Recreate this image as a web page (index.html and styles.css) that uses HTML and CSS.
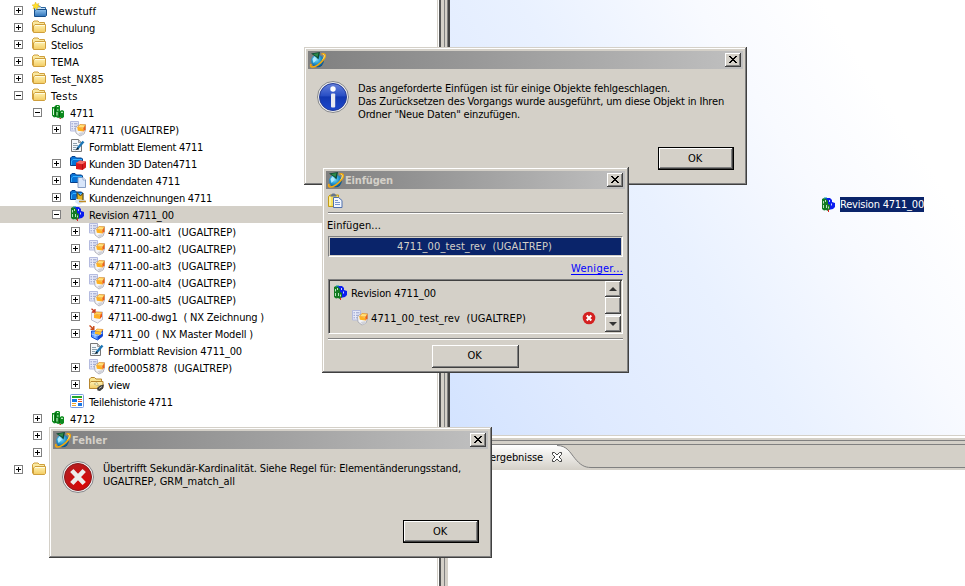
FILE: index.html
```html
<!DOCTYPE html>
<html lang="de">
<head>
<meta charset="utf-8">
<title>Einfügen</title>
<link rel="stylesheet" href="styles.css">
</head>
<body>
<svg class="defs" aria-hidden="true">
  <defs>
    <linearGradient id="gy" x1="0" y1="0" x2="0" y2="1"><stop offset="0" stop-color="#fff3b4"/><stop offset="1" stop-color="#f3cb60"/></linearGradient>
    <linearGradient id="gb" x1="0" y1="0" x2="0" y2="1"><stop offset="0" stop-color="#8fc2ee"/><stop offset="1" stop-color="#2e72b8"/></linearGradient>
    <radialGradient id="gr" cx=".65" cy=".7" r=".8"><stop offset="0" stop-color="#dc0505"/><stop offset="1" stop-color="#b11e22"/></radialGradient>
    <linearGradient id="gi" x1="0" y1="0" x2="0" y2="1"><stop offset="0" stop-color="#6883dc"/><stop offset=".45" stop-color="#294fc5"/><stop offset=".5" stop-color="#1238b1"/><stop offset="1" stop-color="#1c48cc"/></linearGradient>
    <radialGradient id="gg" cx=".4" cy=".35" r=".7"><stop offset="0" stop-color="#8de3fa"/><stop offset=".5" stop-color="#249bd5"/><stop offset="1" stop-color="#06447c"/></radialGradient>
    <linearGradient id="gt" x1="0" y1="0" x2="0" y2="1"><stop offset="0" stop-color="#fff"/><stop offset="1" stop-color="#d4d0c8"/></linearGradient>
  </defs>
  <symbol id="folder" viewBox="0 0 16 16">
    <path d="M.5 12.500V3.500L2 2h4l1.500 1.500h5V6" fill="#fae9a0" stroke="#cf9f3c"/>
    <path d="M1.500 13.500V7L3 5.500h10.500v7l-1 1z" fill="url(#gy)" stroke="#cf9f3c"/><path d="M3 6.500h10" stroke="#fffce0"/>
  </symbol>
  <symbol id="newfolder" viewBox="0 0 16 16">
    <path d="M2.500 13V5L4 4h3.500L9 5.500h4.500v3" fill="#c5e0f7" stroke="#28649f"/>
    <path d="M2.500 14.500V9L4 7.500h10.500v6l-1 1z" fill="url(#gb)" stroke="#164d88"/>
    <path d="M3.500 0l1 2.200L7 1.500 5.800 3.500 8 5 5.500 5.200 5 8 3.500 5.800 1 7l.8-2.500L0 3l2.600-.4z" fill="#ffe02d" stroke="#d9a300" stroke-width=".4"/>
  </symbol>
  <symbol id="item" viewBox="0 0 16 16">
    <path d="M1 3h2l2-2h3l1 1v5l2-1 2 1v6l-2 1.500-2-1-2 .5-2-1-2 .5-2-2z" fill="#0d8a1e"/>
    <path d="M2.500 4.500V11M6 2.500h1.500M6 6h1.500M6 8v3.500M10 8l1 .6 1-.6" stroke="#d9ffd9" fill="none"/><path d="M4.500 3v9.500M8.500 8v5.500" stroke="#06560f" stroke-width=".8"/><path d="M8.500 14.500h1.500" stroke="#d03020"/>
  </symbol>
  <symbol id="rev" viewBox="0 0 16 16">
    <path d="M4 1h5l2 2v2l3 1v4l-2 2-5 1-3-3z" fill="#0a1cf0"/>
    <path d="M1 2l2-1 2 1 2 2v3l2 1v4l-2 2-2-1-2 .5L1 12z" fill="#127a22"/>
    <path d="M2.500 4v2.500M2.500 8v3M4.500 3v2M5.500 8v3M7.500 9.500v2" stroke="#c9efd0" stroke-width=".9"/><path d="M8.500 3v2M10.500 6.500v2" stroke="#dfe4ff" stroke-width=".9"/>
    <path d="M7 12.500h1V15H7z" fill="#e02020"/><path d="M3 1h3" stroke="#00a0a0"/>
  </symbol>
  <symbol id="alt" viewBox="0 0 16 16">
    <path d="M.5.500h8v9.500h-8z" fill="#e6e9f8" stroke="#b4bbdf"/><path d="M1.500 2.800h1.500M4 2.800h3.500M1.500 5.300h1.500M4 5.300h3M1.500 7.800h1.500M4 7.800h2" stroke="#949ecb"/>
    <path d="M5.500 7l2-2.500 8-1v5.500l-1.500 4-4 2-4-3z" fill="#f4f5f8" stroke="#9fa1ac" stroke-width=".8"/>
    <path d="M7.500 6.500l2.500-3 5.500.5-2 3z" fill="#ffe27c" stroke="#f39a28" stroke-width=".8"/><path d="M7.300 6.500l6.200.9v3.200l-5.700-.8z" fill="#ffb11f"/><path d="M13.300 7.200L15.500 4.200v4l-2 2.600z" fill="#ee6212"/>
    <path d="M8.500 12l5-1v2.500l-3 1.300z" fill="#d0d2d9"/>
  </symbol>
  <symbol id="dwg" viewBox="0 0 16 16">
    <path d="M2.500 4h11v7.500l-5 3.500-6-3z" fill="#f5f5fa" stroke="#b0b0c4" stroke-width=".8"/>
    <path d="M5 6l2-2 6 .5-2 2.500z" fill="#ffd85c" stroke="#ef8b1c" stroke-width=".7"/><path d="M5 6.500l6 .8V11l-6-1z" fill="#ffaf22"/><path d="M11 7.300L13 5v3.500L11 11z" fill="#ee5a12"/>
    <path d="M2.500.8l3.500 3M3 4h3V1" stroke="#c8381c" stroke-width="1.300" fill="none"/>
  </symbol>
  <symbol id="master" viewBox="0 0 16 16">
    <path d="M2.500 6h5l6-1v6l-5 4-6-3z" fill="#5698ff" stroke="#1a50d5"/><path d="M2.500 9l6 2 5-3M6 7v6" stroke="#c7deff" fill="none" stroke-width=".8"/>
    <path d="M6 6l2-2 6 .5-2 2.500z" fill="#ffe26b" stroke="#ef8b1c" stroke-width=".7"/><path d="M6 6.500l6 .8V10l-6-1z" fill="#ffbd22"/>
    <path d="M8.500 11.500l5-3v3l-5 3.500z" fill="#1145d6"/>
    <path d="M.500.500l4 3.500M1.500 4.300h3.300V1" stroke="#c84b1c" stroke-width="1.400" fill="none"/>
  </symbol>
  <symbol id="form" viewBox="0 0 16 16">
    <path d="M1.500 1.500h7l3 3v9h-10z" fill="#f5f8fa" stroke="#777"/><path d="M8.500 1.500v3h3" fill="#ccc" stroke="#777" stroke-width=".7"/>
    <path d="M3 5.500h4M3 7.500h5M3 9.500h3M3 11.500h6" stroke="#8da0ac"/>
    <path d="M13.500 3.500L7 11" stroke="#1d76b5" stroke-width="2.400"/><path d="M8 9.200l-2.600 3.400 3.300-1.900z" fill="#111"/>
  </symbol>
  <symbol id="bluef" viewBox="0 0 16 16">
    <path d="M.5 10.500V3L2 1.500h3L6.500 3h5l1 1v6.500z" fill="#0872d5" stroke="#063f88"/><path d="M1.500 10V6L3 4.500h9" stroke="#35b0ff" fill="none"/>
  </symbol>
  <symbol id="k3d" viewBox="0 0 16 16"><use href="#bluef"/><path d="M6 8l4-2.500 6 1v6l-3.500 2.500L6 14z" fill="#d81a1c"/><path d="M6 8l4-2.500 6 1-3.500 2.700z" fill="#f56b66"/><path d="M12.500 9.200v5.500" stroke="#9c0c10" stroke-width=".7"/></symbol>
  <symbol id="kdat" viewBox="0 0 16 16"><use href="#bluef"/><path d="M8 5.500h5l2.500 2.500v7.500H8z" fill="#d8e6fa" stroke="#7b94bd" stroke-width=".9"/><path d="M13 5.500V8h2.500" fill="#fff" stroke="#7b94bd" stroke-width=".7"/></symbol>
  <symbol id="kzei" viewBox="0 0 16 16"><use href="#bluef"/><path d="M5 13l2-6 7-3v6l2 2-4 2-3 2z" fill="#d7e7f6"/><path d="M7 10V3.500l3.500 3.500L13 4v7" fill="#e5b520" stroke="#453915" stroke-width="1"/><path d="M9 12.500h7" stroke="#c08b25" stroke-width="1.500"/></symbol>
  <symbol id="view" viewBox="0 0 16 16"><path d="M.5 12.500V3L2 1.500h3.500L7 3h5.500v3" fill="#f9e591" stroke="#b7862e"/><path d="M.5 12.500V7L2 5.500h12v6l-1 1z" fill="url(#gy)" stroke="#b7862e"/><path d="M5 8l3-1.500L9.500 10z" fill="#fff9cf" stroke="#aaa269" stroke-width=".6"/><path d="M8 12l3-2.500 4-1-1 4-3 2.500-2.500-.5z" fill="#3f3f3f"/><path d="M10 12.500l3-2" stroke="#b7b7b7"/></symbol>
  <symbol id="hist" viewBox="0 0 16 16"><rect x=".5" y="1.500" width="13" height="13" rx="1" fill="#fff" stroke="#7a9be0"/><path d="M2 4h10" stroke="#24a72a" stroke-width="2"/><path d="M2 7.500h5" stroke="#1976e4" stroke-width="3"/><path d="M8 6.500h4M8 8.500h4" stroke="#e35a28"/><path d="M2 10.500h4M2 12.500h4" stroke="#f0a52c"/><path d="M8 11.500h4" stroke="#1976e4" stroke-width="3"/></symbol>
  <symbol id="logo" viewBox="0 0 18 16">
    <circle cx="8.500" cy="9" r="6.300" fill="url(#gg)"/><path d="M3.500 7l2.500-3 1.500 4-3 3z" fill="#aeeafd"/>
    <path d="M12.500 2c4-1 5 1.500 2 5.500C11.500 11.500 6.500 15.500 3 15c-1.500-.2-1.600-1.500-1-3" fill="none" stroke="#f5a80b" stroke-width="1.600"/><path d="M14 2.500c2.200 0 1.500 3-.5 5" fill="none" stroke="#ffea75"/>
    <path d="M2 1.500l9-1.500L9.500 7.500 7 5z" fill="#0d4932"/><path d="M4 2l5.500-1L8.500 5z" fill="#2e8b4a"/>
  </symbol>
  <symbol id="paste" viewBox="0 0 16 16"><path d="M.5 3.500L2 2h8.500v11.500h-10z" fill="#f6df5d" stroke="#c29b18"/><path d="M2 4v8.500" stroke="#fff6b0" stroke-width="1.500"/><path d="M2.500 2.500l2-2h2l2 2v1h-6z" fill="#65758c"/><path d="M5.500 4.500h5l3.500 3V14.500H5.500z" fill="#f2f7ff" stroke="#4f6fae"/><path d="M7 7.500h3M7 9.500h5M7 11.500h5" stroke="#7895cf"/></symbol>
  <symbol id="err" viewBox="0 0 14 14"><circle cx="7" cy="7" r="6.300" fill="#d42020"/><path d="M4.700 4.500l4.600 5M9.300 4.500l-4.600 5" stroke="#fff" stroke-width="2"/></symbol>
  <symbol id="close" viewBox="0 0 16 14"><path d="M4 3h2v1h1v1h2V4h1V3h2v1h-1v1h-1v1H9v1h1v1h1v1h1v1h-2V9H9V8H7v1H6v1H4V9h1V8h1V7h1V6H6V5H5V4H4z"/></symbol>
</svg>

<main class="app">
  <section class="tree" id="tree"></section>
  <div class="sash"><i></i></div>
  <section class="right">
    <div class="canvas">
      <div class="node"><svg class="ic"><use href="#rev"/></svg><span class="sel"><span data-w="84">Revision 4711_00</span></span></div>
    </div>
    <div class="hsash"></div>
    <div class="tabs">
      <div class="tab"><span data-w="53">ergebnisse</span><svg class="tabx" viewBox="0 0 12 12"><path d="M1.500 1.500h2L6 4l2.500-2.500h2v2L8 6l2.500 2.500v2h-2L6 8l-2.500 2.500h-2v-2L4 6 1.500 3.500z" fill="#fff" stroke="#444"/></svg></div>
      <svg class="curve" viewBox="0 0 40 25"><path d="M0 0H40V25H0z" fill="url(#gt)"/><path d="M0 .5c10 0 13 7 18 13s9 9 16 9h6V0H0z" fill="#d4d0c8"/><path d="M34 22.500h6V25H34z" fill="#d4d0c8"/><path d="M0 .5c10 0 13 7 18 13s9 9 16 9h6" fill="none" stroke="#808080"/></svg>
      <div class="rest"></div>
    </div>
    <div class="blank"></div>
  </section>
</main>

<div class="dlg info">
  <header><svg class="logo"><use href="#logo"/></svg><b></b><button class="x"><svg><use href="#close"/></svg></button></header>
  <div class="msg">
    <svg class="big" viewBox="0 0 32 32"><circle cx="16" cy="16" r="15.500" fill="#eee" stroke="#85878b"/><circle cx="16" cy="16" r="13.500" fill="url(#gi)" stroke="#243b98"/><circle cx="16" cy="8" r="2.700" fill="#fff"/><rect x="14" y="12.500" width="4.200" height="14" rx="1" fill="#e9eaf0"/></svg>
    <p><span data-w="312">Das angeforderte Einfügen ist für einige Objekte fehlgeschlagen.</span><br><span data-w="366">Das Zurücksetzen des Vorgangs wurde ausgeführt, um diese Objekt in Ihren</span><br><span data-w="162">Ordner "Neue Daten" einzufügen.</span></p>
  </div>
  <button class="btn def"><span data-w="14">OK</span></button>
</div>

<div class="dlg paste">
  <header><svg class="logo"><use href="#logo"/></svg><b><span data-w="48">Einfügen</span></b><button class="x"><svg><use href="#close"/></svg></button></header>
  <div class="body">
    <svg class="ic pic"><use href="#paste"/></svg>
    <hr>
    <div class="lbl"><span data-w="54">Einfügen...</span></div>
    <div class="field"><span data-w="155">4711_00_test_rev&nbsp; (UGALTREP)</span></div>
    <div class="more"><a data-w="52">Weniger...</a></div>
    <div class="list">
      <div class="rows">
        <div class="r1"><svg class="ic"><use href="#rev"/></svg><span data-w="85">Revision 4711_00</span></div>
        <div class="r2"><svg class="ic"><use href="#alt"/></svg><span data-w="155">4711_00_test_rev&nbsp; (UGALTREP)</span><svg class="er"><use href="#err"/></svg></div>
      </div>
      <div class="scroll"><i class="up"></i><i class="thumb"></i><i class="track"></i><i class="down"></i></div>
    </div>
    <hr>
    <button class="btn"><span data-w="14">OK</span></button>
  </div>
</div>

<div class="dlg error">
  <header><svg class="logo"><use href="#logo"/></svg><b><span data-w="35">Fehler</span></b><button class="x"><svg><use href="#close"/></svg></button></header>
  <div class="msg">
    <svg class="big" viewBox="0 0 32 32"><circle cx="16" cy="16" r="15.500" fill="#eee" stroke="#85878b"/><circle cx="16" cy="16" r="13.500" fill="url(#gr)" stroke="#8d1719"/><path d="M9.800 9.500l12.400 13M22.200 9.500l-12.400 13" stroke="#ececec" stroke-width="4.600"/></svg>
    <p><span data-w="358">Übertrifft Sekundär-Kardinalität. Siehe Regel für: Elementänderungsstand,</span><br><span data-w="132">UGALTREP, GRM_match_all</span></p>
  </div>
  <button class="btn def"><span data-w="14">OK</span></button>
</div>
<script src="script.js"></script>
</body>
</html>
```
FILE: styles.css
```css
* { box-sizing: border-box; }
body { margin: 0; width: 965px; height: 586px; overflow: hidden; background: #fff; color: #000; font: 11px/13px "DejaVu Sans Condensed", "DejaVu Sans", sans-serif; position: relative; }
svg { display: block; flex: none; }
.defs { position: absolute; width: 0; height: 0; }
span, a { white-space: pre; }
.ic { width: 16px; height: 16px; }
.app { display: flex; height: 586px; }
.tree { width: 437px; padding-top: 2px; }
.row { display: flex; align-items: center; height: 17px; padding-left: 14px; }
.row.on { background: #d4d0c8; }
.row span { padding-top: 2px; }
.lv1 { padding-left: 33px; }
.lv2 { padding-left: 52px; }
.lv3 { padding-left: 71px; }
.exp { width: 9px; height: 9px; border: 1px solid #808080; background: linear-gradient(#000, #000) center/5px 1px no-repeat #fff; margin-right: 8px; flex: none; }
.exp.plus { background: linear-gradient(#000, #000) center/5px 1px no-repeat, linear-gradient(#000, #000) center/1px 5px no-repeat #fff; }
.exp.none { visibility: hidden; }
.row .ic { margin: -1px 3px 0 1px; }

.sash { width: 13px; display: flex; background: linear-gradient(90deg, #d4d0c8 1px, #fff 1px 2px, #555 2px 4px, #d4d0c8 4px 7px, #808080 7px 8px, #d4d0c8 8px 10px, #808080 10px 11px, #444 11px 13px); }
.sash i { width: 13px; height: 116px; align-self: flex-end; background: linear-gradient(90deg, transparent 8px, #d4d0c8 8px 11px, #fff 11px); }
.right { flex: 1; display: flex; flex-direction: column; }
.canvas { height: 435px; background: linear-gradient(57deg, #d3e3ff 0, #dfeaff 20%, #e9f1ff 44%, #f8faff 66%, #fff 82%); padding: 197px 0 0 371px; }
.node { display: flex; align-items: center; }
.node .ic { margin-right: 3px; }
.sel { background: #0a246a; color: #fff; height: 15px; width: 84px; line-height: 16px; margin-bottom: 1px; }
.hsash { height: 10px; background: linear-gradient(#d4d0c8 1px, #fff 1px 3px, #d4d0c8 3px 5px, #808080 5px 6px, #d4d0c8 6px 9px, #808080 9px); }
.tabs { display: flex; height: 25px; }
.tab { width: 107px; flex: none; display: flex; align-items: center; padding-left: 40px; background: linear-gradient(#fff, #d4d0c8); position: relative; z-index: 1; }
.tabx { width: 12px; height: 12px; margin-left: 8px; margin-top: -2px; }
.curve { width: 40px; height: 25px; }
.rest { flex: 1; background: linear-gradient(#d4d0c8 22px, #808080 22px 23px, #d4d0c8 23px); }

.dlg { position: absolute; z-index: 2; background: #d4d0c8; padding: 4px; box-shadow: inset -1px -1px #404040, inset 1px 1px #d4d0c8, inset -2px -2px #808080, inset 2px 2px #fff; display: flex; flex-direction: column; }
.info { left: 304px; top: 47px; width: 443px; height: 138px; }
.paste { left: 322px; top: 167px; width: 307px; height: 206px; }
.error { left: 49px; top: 427px; width: 443px; height: 131px; }
header { height: 18px; flex: none; background: linear-gradient(90deg, #808080, #c0c0c0); display: flex; align-items: center; padding: 0 2px 0 1px; color: #d4d0c8; }
header b { flex: 1; font-weight: bold; }
.logo { width: 18px; height: 16px; }
button { font: inherit; padding: 0; border: 0; background: #d4d0c8; color: #000; }
.x { width: 16px; height: 14px; box-shadow: inset -1px -1px #404040, inset 1px 1px #fff, inset -2px -2px #808080; }
.x svg { width: 16px; height: 14px; }
.msg { display: flex; flex: 1; padding: 12px 0 0 9px; }
.big { width: 32px; height: 32px; }
.msg p { margin: 1px 0 0 9px; }
.btn { width: 87px; height: 23px; box-shadow: inset -1px -1px #404040, inset 1px 1px #fff, inset -2px -2px #808080; align-self: center; display: flex; align-items: center; justify-content: center; flex: none; padding-right: 2px; }
.btn.def { width: 76px; height: 23px; align-self: flex-end; margin: 0 9px 11px 0; border: 1px solid #000; }
.body { display: flex; flex-direction: column; padding: 0 2px; }
.body > .btn { padding-bottom: 2px; }
.paste .pic { margin: 4px 0 3px; }
hr { width: 295px; height: 2px; margin: 0; border: 0; background: linear-gradient(#808080 1px, #fff 1px); flex: none; }
.lbl { height: 22px; padding: 5px 0 0; margin-left: -1px; }
.field { height: 21px; border: 1px solid; border-color: #808080 #fff #fff #808080; box-shadow: inset 0 0 0 1px #d4d0c8; background: #0a246a; color: #d4d0c8; display: flex; align-items: center; justify-content: center; padding-right: 2px; }
.more { height: 22px; display: flex; justify-content: flex-end; padding-top: 5px; }
.more a { color: #00f; border-bottom: 1px solid #00f; height: 13px; line-height: 13px; display: block; }
.list { height: 55px; display: flex; border: 1px solid; border-color: #808080 #fff #fff #808080; box-shadow: inset 1px 1px #404040, inset -1px -1px #d4d0c8; padding: 1px; }
.rows { flex: 1; padding: 3px 0 0 3px; }
.r1, .r2 { display: flex; align-items: center; height: 18px; }
.r1 .ic { margin-right: 2px; }
.r2 { padding-left: 19px; margin-top: 7px; }
.r2 .ic { margin-right: 3px; }
.er { width: 14px; height: 14px; margin-left: 56px; }
.scroll { width: 16px; display: flex; flex-direction: column; }
.scroll i { height: 16px; background: #d4d0c8; box-shadow: inset -1px -1px #404040, inset 1px 1px #fff, inset -2px -2px #808080; display: flex; align-items: center; justify-content: center; }
.scroll .thumb { height: 17px; }
.scroll .track { height: 2px; background: #eee; box-shadow: none; }
.up::before, .down::before { content: ""; border: 4px solid transparent; border-top: 0; border-bottom-color: #333; }
.down::before { border: 4px solid transparent; border-bottom: 0; border-top-color: #333; }
.list + hr { margin: 4px 0 5px; }
```
FILE: script.js
```js
// level, expander, icon, label, label width
const rows = [
  [0, '+', 'newfolder', 'Newstuff', 45],
  [0, '+', 'folder', 'Schulung', 44],
  [0, '+', 'folder', 'Stelios', 32],
  [0, '+', 'folder', 'TEMA', 28],
  [0, '+', 'folder', 'Test_NX85', 53],
  [0, '-', 'folder', 'Tests', 27],
  [1, '-', 'item', '4711', 24],
  [2, '+', 'alt', '4711  (UGALTREP)', 90],
  [2, '', 'form', 'Formblatt Element 4711', 114],
  [2, '+', 'k3d', 'Kunden 3D Daten4711', 108],
  [2, '+', 'kdat', 'Kundendaten 4711', 91],
  [2, '+', 'kzei', 'Kundenzeichnungen 4711', 123],
  [2, '-', 'rev', 'Revision 4711_00', 85],
  [3, '+', 'alt', '4711-00-alt1  (UGALTREP)', 128],
  [3, '+', 'alt', '4711-00-alt2  (UGALTREP)', 128],
  [3, '+', 'alt', '4711-00-alt3  (UGALTREP)', 128],
  [3, '+', 'alt', '4711-00-alt4  (UGALTREP)', 128],
  [3, '+', 'alt', '4711-00-alt5  (UGALTREP)', 128],
  [3, '+', 'dwg', '4711-00-dwg1  ( NX Zeichnung )', 156],
  [3, '+', 'master', '4711_00  ( NX Master Modell )', 145],
  [3, '', 'form', 'Formblatt Revision 4711_00', 134],
  [3, '+', 'alt', 'dfe0005878  (UGALTREP)', 124],
  [3, '+', 'view', 'view', 22],
  [2, '', 'hist', 'Teilehistorie 4711', 84],
  [1, '+', 'item', '4712', 25],
  [1, '+', '', '', 0],
  [1, '+', '', '', 0],
  [0, '+', 'folder', '', 0]
];
document.getElementById('tree').innerHTML = rows.map(([lv, ex, ic, label, w]) =>
  `<div class="row lv${lv}${label === 'Revision 4711_00' ? ' on' : ''}">` +
  `<div class="exp ${ex === '+' ? 'plus' : ex === '-' ? '' : 'none'}"></div>` +
  (ic ? `<svg class="ic"><use href="#${ic}"/></svg>` : '') +
  (label ? `<span data-w="${w}">${label}</span>` : '') + '</div>').join('');

// Track each label so that it fills its given width.
document.querySelectorAll('[data-w]').forEach(el => {
  const r = document.createRange();
  r.selectNodeContents(el);
  const gap = el.dataset.w - r.getBoundingClientRect().width;
  el.style.letterSpacing = (gap / el.textContent.length) + 'px';
});
```
